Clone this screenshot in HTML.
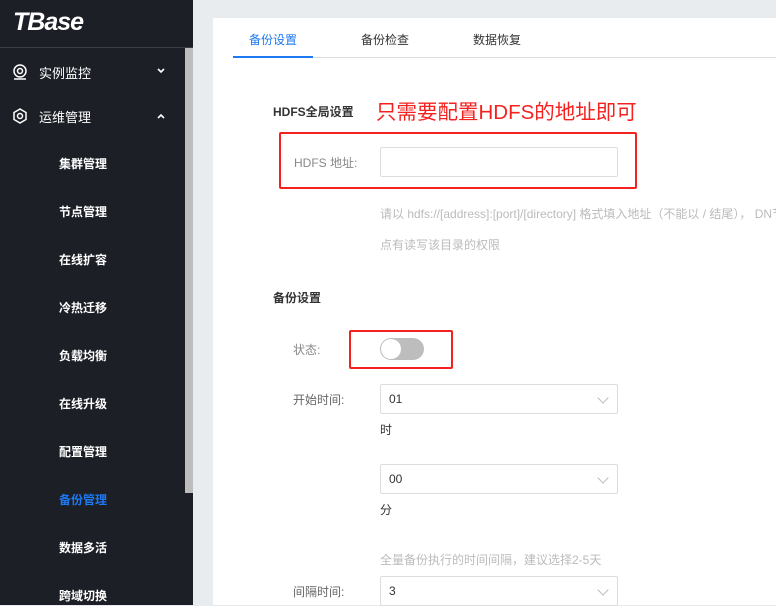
<!DOCTYPE html>
<html><head><meta charset="utf-8"><style>
*{margin:0;padding:0;box-sizing:border-box}
body{width:776px;height:605px;overflow:hidden;background:#e9ecef;font-family:"Liberation Sans","Noto Sans CJK SC",sans-serif;position:relative}
.sb{position:absolute;left:0;top:0;width:193px;height:605px;background:#1c1f26}
.logo{position:absolute;left:13px;top:8px;color:#fff;font-style:italic;font-weight:bold;font-size:25px;letter-spacing:-1px}
.hline{position:absolute;left:0;top:47px;width:193px;height:1px;background:#3a3d44}
.scroll{position:absolute;left:185px;top:48px;width:8px;height:445px;background:#bdbdbd}
.mi{position:absolute;color:#fff;font-size:13px}
.si{position:absolute;left:59px;color:#fff;font-size:12px;font-weight:bold}
.ic{position:absolute;left:12px;width:16px;height:16px}
.p{position:absolute;left:213px;top:18px;width:563px;height:587px;background:#fff}
.t{position:absolute;font-size:12px;color:#333}
.g{position:absolute;font-size:12px;color:#999}
.inp{position:absolute;border:1px solid #ddd;border-radius:2px;background:#fff;font-size:12px;color:#333;padding:0 8px;line-height:28px}
.red{position:absolute;border:2px solid #f5211f;border-radius:2px}
.chev{position:absolute;right:10px;top:9px;width:8px;height:8px;border-right:1px solid #bbb;border-bottom:1px solid #bbb;transform:rotate(45deg)}
</style></head><body>
<div class="sb">
<div class="logo">TBase</div>
<div class="hline"></div>
<div class="scroll"></div>
<svg class="ic" style="top:64px" viewBox="0 0 16 16"><circle cx="8" cy="7" r="6" fill="none" stroke="#fff" stroke-width="1.5"/><circle cx="8" cy="7" r="2.5" fill="none" stroke="#fff" stroke-width="1.5"/><path d="M2 15h12" stroke="#fff" stroke-width="1.5"/></svg>
<div class="mi" style="left:39px;top:63px">实例监控</div>
<svg class="ic" style="top:108px" viewBox="0 0 16 16"><path d="M8 1l6 3.5v7L8 15l-6-3.5v-7z" fill="none" stroke="#fff" stroke-width="1.5"/><circle cx="8" cy="8" r="2.5" fill="none" stroke="#fff" stroke-width="1.5"/></svg>
<div class="mi" style="left:39px;top:107px">运维管理</div>
<svg style="position:absolute;left:157px;top:113px" width="8" height="6" viewBox="0 0 8 6"><path d="M1 5l3-3 3 3" fill="none" stroke="#fff" stroke-width="1.6"/></svg>
<svg style="position:absolute;left:157px;top:68px" width="8" height="6" viewBox="0 0 8 6"><path d="M1 1l3 3 3-3" fill="none" stroke="#fff" stroke-width="1.6"/></svg>
<div class="si" style="top:155px">集群管理</div>
<div class="si" style="top:203px">节点管理</div>
<div class="si" style="top:251px">在线扩容</div>
<div class="si" style="top:299px">冷热迁移</div>
<div class="si" style="top:347px">负载均衡</div>
<div class="si" style="top:395px">在线升级</div>
<div class="si" style="top:443px">配置管理</div>
<div class="si" style="top:491px;color:#1e78f0">备份管理</div>
<div class="si" style="top:539px">数据多活</div>
<div class="si" style="top:587px">跨域切换</div>
</div>
<div class="p"></div>
<div class="t" style="left:249px;top:31px;color:#1e78f0">备份设置</div>
<div class="t" style="left:361px;top:31px">备份检查</div>
<div class="t" style="left:473px;top:31px">数据恢复</div>
<div style="position:absolute;left:233px;top:57px;width:543px;height:1px;background:#ddd"></div>
<div style="position:absolute;left:233px;top:56px;width:80px;height:2px;background:#1e78f0"></div>
<div class="t" style="left:273px;top:103px;font-weight:bold">HDFS全局设置</div>
<div style="position:absolute;left:376px;top:95px;font-size:20.5px;color:#f5211f;white-space:nowrap">只需要配置HDFS的地址即可</div>
<div class="red" style="left:279px;top:132px;width:358px;height:57px"></div>
<div class="g" style="left:294px;top:154px;color:#888">HDFS 地址:</div>
<div class="inp" style="left:380px;top:147px;width:238px;height:30px"></div>
<div class="g" style="left:380px;top:205px;color:#bbb;white-space:nowrap">请以 hdfs://[address]:[port]/[directory] 格式填入地址（不能以 / 结尾）， DN节</div>
<div class="g" style="left:380px;top:236px;color:#bbb">点有读写该目录的权限</div>
<div class="t" style="left:273px;top:289px;font-weight:bold">备份设置</div>
<div class="red" style="left:349px;top:330px;width:104px;height:39px"></div>
<div class="g" style="left:293px;top:341px;color:#888">状态:</div>
<div style="position:absolute;left:380px;top:338px;width:44px;height:22px;border-radius:11px;background:#bdbdbd"></div>
<div style="position:absolute;left:381px;top:339px;width:20px;height:20px;border-radius:10px;background:#fff"></div>
<div class="g" style="left:293px;top:391px;color:#666">开始时间:</div>
<div class="inp" style="left:380px;top:384px;width:238px;height:30px">01<span class="chev"></span></div>
<div class="t" style="left:380px;top:421px">时</div>
<div class="inp" style="left:380px;top:464px;width:238px;height:30px">00<span class="chev"></span></div>
<div class="t" style="left:380px;top:501px">分</div>
<div class="g" style="left:380px;top:551px;color:#bbb">全量备份执行的时间间隔，建议选择2-5天</div>
<div class="g" style="left:293px;top:583px;color:#666">间隔时间:</div>
<div class="inp" style="left:380px;top:576px;width:238px;height:30px">3<span class="chev"></span></div>
</body></html>
